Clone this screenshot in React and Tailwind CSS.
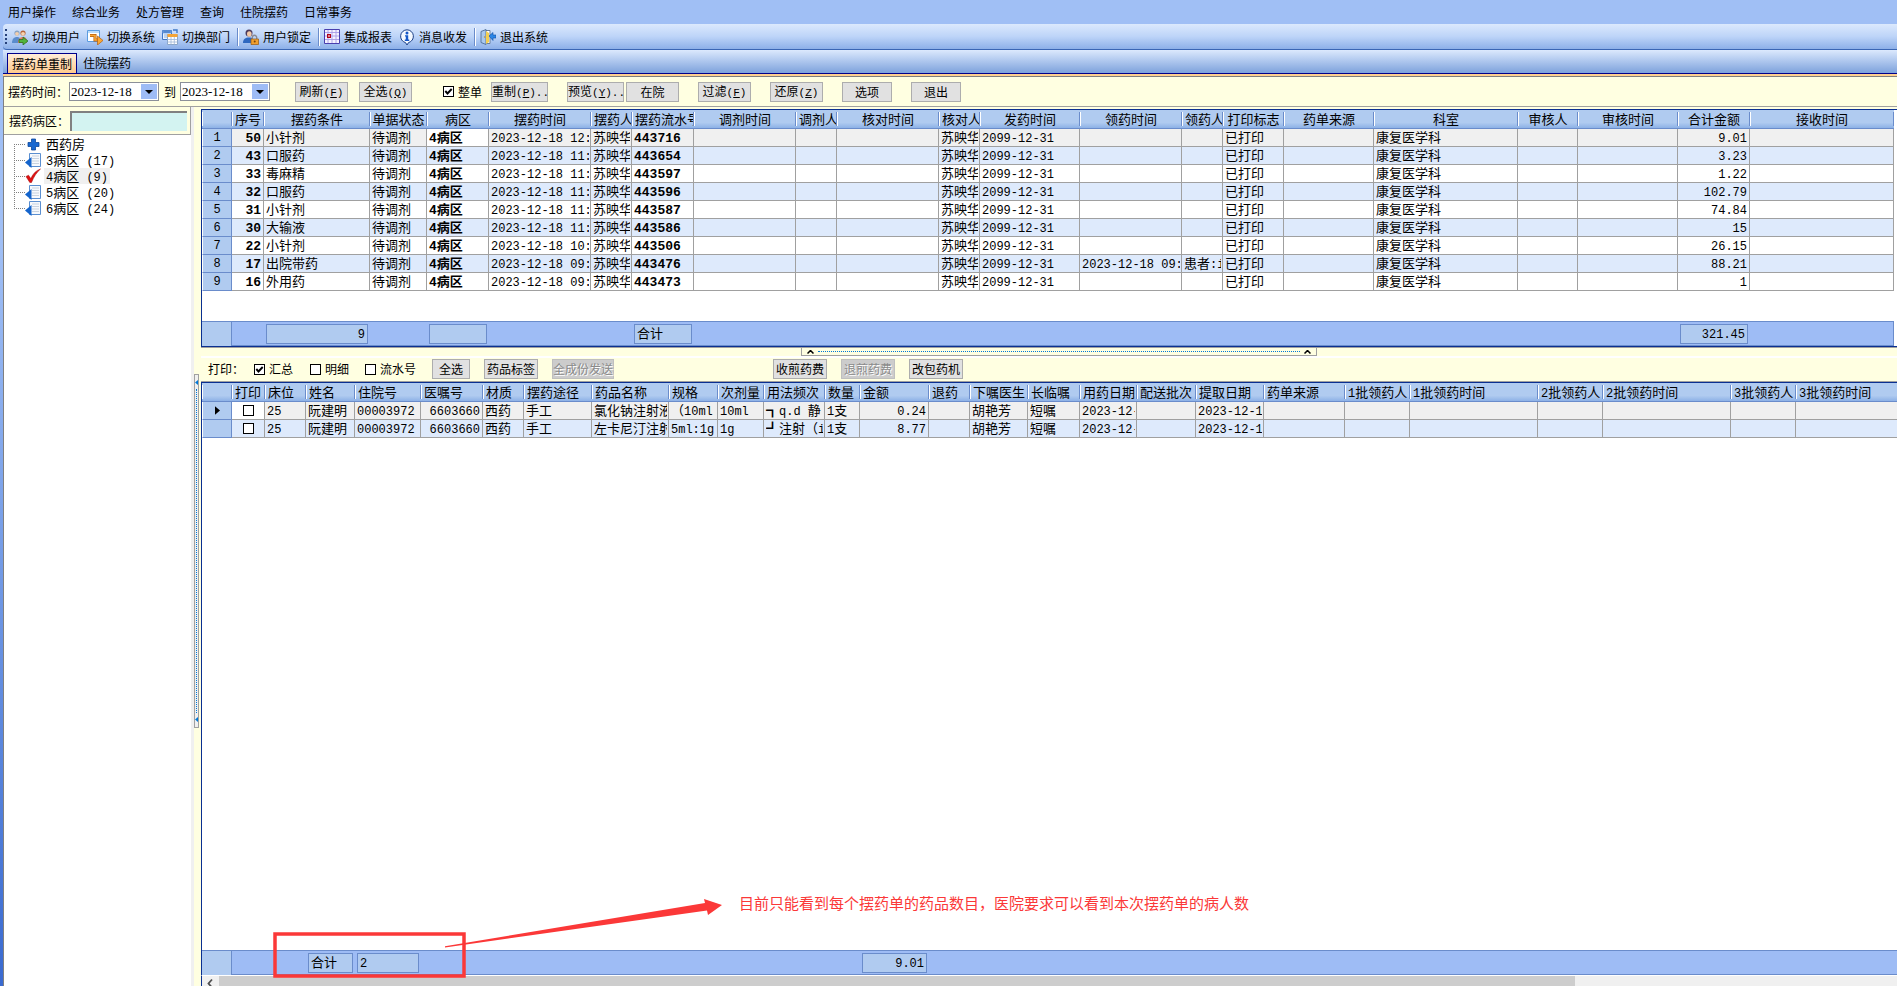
import React from "react";

const SANS = "font-['Noto_Sans_CJK_SC',sans-serif]";

/* Splits mixed text so that half-width runs use the monospaced face. */
function Txt({ children, bold }) {
  const parts = String(children).split(/([\x20-\x7e]+)/).filter(Boolean);
  return parts.map((p, i) =>
    /^[\x20-\x7e]+$/.test(p) ? (
      <span
        key={i}
        className={
          "whitespace-pre font-['Liberation_Mono',monospace] " + (bold ? "text-[13px]" : "text-[12px]")
        }
      >
        {p}
      </span>
    ) : (
      <span key={i}>{p}</span>
    )
  );
}

/* Estimated width of a mixed string: full-width glyphs 13px, half-width 7.2px. */
const textWidth = (s) => [...s].reduce((n, ch) => n + (ch > "~" ? 13 : 7.2), 0);

const TOP_COLS = [
  { w: 30 },
  { t: "序号", w: 32, right: true, bold: true },
  { t: "摆药条件", w: 106 },
  { t: "单据状态", w: 57 },
  { t: "病区", w: 62, bold: true },
  { t: "摆药时间", w: 102 },
  { t: "摆药人", w: 41 },
  { t: "摆药流水号", w: 62, bold: true },
  { t: "调剂时间", w: 102 },
  { t: "调剂人", w: 41 },
  { t: "核对时间", w: 102 },
  { t: "核对人", w: 41 },
  { t: "发药时间", w: 100 },
  { t: "领药时间", w: 102 },
  { t: "领药人", w: 41 },
  { t: "打印标志", w: 61 },
  { t: "药单来源", w: 90 },
  { t: "科室", w: 144 },
  { t: "审核人", w: 60 },
  { t: "审核时间", w: 100 },
  { t: "合计金额", w: 72, right: true },
  { t: "接收时间", w: 144 },
];

const ORDERS = [
  ["50", "小针剂", "12:", "443716", "9.01"],
  ["43", "口服药", "11:", "443654", "3.23"],
  ["33", "毒麻精", "11:", "443597", "1.22"],
  ["32", "口服药", "11:", "443596", "102.79"],
  ["31", "小针剂", "11:", "443587", "74.84"],
  ["30", "大输液", "11:", "443586", "15"],
  ["22", "小针剂", "10:", "443506", "26.15"],
  ["17", "出院带药", "09:", "443476", "88.21", "2023-12-18 09:", "患者:i"],
  ["16", "外用药", "09:", "443473", "1"],
];

const TOP_ROWS = ORDERS.map(([no, cond, time, serial, sum, pick = "", picker = ""], i) => [
  String(i + 1), no, cond, "待调剂", "4病区", "2023-12-18 " + time, "苏映华", serial,
  "", "", "", "苏映华", "2099-12-31", pick, picker, "已打印", "", "康复医学科", "", "", sum, "",
]);

const BOTTOM_COLS = [
  { w: 30 },
  { t: "打印", w: 33, check: true },
  { t: "床位", w: 41 },
  { t: "姓名", w: 49 },
  { t: "住院号", w: 66 },
  { t: "医嘱号", w: 62, right: true },
  { t: "材质", w: 41 },
  { t: "摆药途径", w: 68 },
  { t: "药品名称", w: 77 },
  { t: "规格", w: 49 },
  { t: "次剂量", w: 46 },
  { t: "用法频次", w: 61 },
  { t: "数量", w: 35 },
  { t: "金额", w: 69, right: true },
  { t: "退药", w: 41 },
  { t: "下嘱医生", w: 58 },
  { t: "长临嘱", w: 52 },
  { t: "用药日期", w: 57 },
  { t: "配送批次", w: 59 },
  { t: "提取日期", w: 68 },
  { t: "药单来源", w: 81 },
  { t: "1批领药人", w: 65 },
  { t: "1批领药时间", w: 128 },
  { t: "2批领药人", w: 65 },
  { t: "2批领药时间", w: 128 },
  { t: "3批领药人", w: 65 },
  { t: "3批领药时间", w: 102 },
];

const BOTTOM_ROWS = [
  ["▶", "", "25", "阮建明", "00003972", "6603660", "西药", "手工", "氯化钠注射液", "（10ml", "10ml",
    "┓q.d 静", "1支", "0.24", "", "胡艳芳", "短嘱", "2023-12-", "", "2023-12-1", "", "", "", "", "", "", ""],
  ["", "", "25", "阮建明", "00003972", "6603660", "西药", "手工", "左卡尼汀注射", "5ml:1g", "1g",
    "┛注射（i", "1支", "8.77", "", "胡艳芳", "短嘱", "2023-12-", "", "2023-12-1", "", "", "", "", "", "", ""],
];

function CheckBox({ checked, id, label }) {
  return (
    <span className="relative block size-[11px] shrink-0">
      <input
        id={id}
        type="checkbox"
        defaultChecked={checked}
        aria-label={label}
        className="peer m-0 block size-[11px] appearance-none border border-black bg-white"
      />
      <svg viewBox="0 0 11 11" className="pointer-events-none absolute inset-0 hidden size-[11px] peer-checked:block">
        <path d="M2.300 5l2.200 2.500L8.700 3" fill="none" stroke="black" strokeWidth="1.900" />
      </svg>
    </span>
  );
}

function Grid({ cols, rows, footer, center, activeCol, rowNumbers, children }) {
  const total = cols.reduce((s, c) => s + c.w, 0);
  return (
    <div className="relative flex min-h-0 flex-1 flex-col overflow-hidden border-t border-l border-[#0a2f90] bg-white">
      <table className="table-fixed border-separate border-spacing-0 text-[13px]" style={{ width: total }}>
        <colgroup>
          {cols.map((c, i) => (
            <col key={i} style={{ width: c.w }} />
          ))}
        </colgroup>
        <thead>
          <tr>
            {cols.map((c, i) => {
              const tight = c.t && c.w - c.t.length * 13 < 4;
              const clipped = c.t && textWidth(c.t) > c.w - 3;
              return (
                <th
                  key={i}
                  className="h-[19px] border-b border-[#6a8ccb] bg-linear-to-b from-[#b0cbf0] from-70% to-[#8db1e6] p-0 font-normal"
                >
                  <div
                    className={
                      "flex h-[14px] border-r border-l border-r-[#6a8ccb] border-l-white " +
                      (center && !tight ? "justify-center" : "pl-[2px]")
                    }
                  >
                    <div className={"min-w-0 leading-[13px] whitespace-nowrap " + (clipped ? "overflow-x-clip" : "")}>
                      {c.t ? <Txt>{c.t}</Txt> : null}
                    </div>
                  </div>
                </th>
              );
            })}
          </tr>
        </thead>
        <tbody>
          {rows.map((r, ri) => (
            <tr key={ri} className={ri === 0 ? "bg-[#f0f0f0]" : ri % 2 ? "bg-[#deeafc]" : "bg-white"}>
              {r.map((v, ci) => {
                const c = cols[ci];
                if (ci === 0)
                  return (
                    <td
                      key={ci}
                      className="h-[18px] border-r border-b border-l border-[#6a8ccb] border-l-white bg-[#b0cbf0] p-0"
                    >
                      <div className="flex h-[17px] items-center justify-center leading-[16px]">
                        {rowNumbers ? (
                          <Txt>{v}</Txt>
                        ) : v ? (
                          <svg viewBox="0 0 6 10" className="h-[9px] w-[5px]">
                            <path d="M0 0l6 5-6 5z" />
                          </svg>
                        ) : null}
                      </div>
                    </td>
                  );
                return (
                  <td
                    key={ci}
                    className={
                      "h-[18px] border-r border-b border-[#a0a0a0] p-0 " +
                      (ri === 0 && ci === activeCol ? "bg-white " : "") +
                      (c.bold ? "font-bold" : "")
                    }
                  >
                    {c.check ? (
                      <div className="flex justify-center">
                        <CheckBox label="打印" />
                      </div>
                    ) : (
                      <div
                        className={
                          "ml-[2px] h-[17px] leading-[15px] whitespace-nowrap " +
                          (c.right ? "mr-[2px] text-right " : "mr-px ") +
                          (textWidth(v) > c.w - 4 ? "overflow-x-clip" : "")
                        }
                      >
                        <Txt bold={c.bold}>{v}</Txt>
                      </div>
                    )}
                  </td>
                );
              })}
            </tr>
          ))}
        </tbody>
      </table>
      <div className="min-h-0 flex-1" />
      <div
        className="grid h-[25px] shrink-0 border-y border-r border-[#6a8ccb] bg-[#9ebcf5] text-[13px]"
        style={{ width: total, gridTemplateColumns: cols.map((c) => c.w + "px").join(" ") }}
      >
        {cols.map((c, i) =>
          i === 0 ? (
            <div key={i} className="border-r border-[#6a8ccb] bg-[#b0cbf0]" />
          ) : footer[i] !== undefined ? (
            <div
              key={i}
              className={
                "mx-[2px] my-[2px] border border-[#6a8ccb] bg-[#b0cbf0] px-[2px] leading-[15px] whitespace-nowrap " +
                (c.right || footer[i] === "9" ? "text-right" : "")
              }
            >
              <Txt>{footer[i]}</Txt>
            </div>
          ) : (
            <div key={i} />
          )
        )}
      </div>
      {children}
    </div>
  );
}

function Btn({ children, hot, dots, disabled, className = "" }) {
  return (
    <button
      type="button"
      disabled={disabled}
      className={
        "h-5 shrink-0 border text-[12px] leading-[16px] whitespace-nowrap " +
        (disabled
          ? "border-[#bfbfbf] bg-[#cccccc] text-[#8a8a8a] [text-shadow:1px_1px_0_#fff] "
          : "border-[#adadad] bg-[#e1e1e1] text-black ") +
        className
      }
    >
      {children}
      {hot && (
        <span className="font-['Liberation_Mono',monospace] text-[11px]">
          (<span className="underline">{hot}</span>){dots}
        </span>
      )}
    </button>
  );
}

function DateBox({ id, value }) {
  return (
    <div className="flex h-[19px] w-[90px] border border-[#8c9099] bg-white p-px">
      <input
        id={id}
        defaultValue={value}
        className="min-w-0 flex-1 font-['Liberation_Serif',serif] text-[13px] leading-[14px] outline-none"
      />
      <button type="button" aria-label="选择日期" className="flex w-4 items-center justify-center bg-[#9ebcf5]">
        <svg viewBox="0 0 8 4" className="h-1 w-2">
          <path d="M0 0h8L4 4z" />
        </svg>
      </button>
    </div>
  );
}

const ICONS = {
  users: (
    <>
      <circle cx="5" cy="4" r="2.6" fill="#8aa4c4" />
      <circle cx="11" cy="4" r="2.6" fill="#b8643a" />
      <circle cx="5" cy="4.8" r="1.9" fill="#f3cfae" />
      <circle cx="11" cy="4.8" r="1.9" fill="#f6d3b2" />
      <path d="M0 14c0-4 2-6 5-6s4 2 4 6z" fill="#5b8ccc" />
      <path d="M6 14c0-4 2-6 5-6s4 2 4 5v1z" fill="#e08068" />
      <path d="M7 10.500h4V8l5 4-5 4v-2.500H7z" fill="#52b43c" stroke="#246b1c" strokeWidth=".7" />
    </>
  ),
  system: (
    <>
      <path d="M.5 1.500h12v11H.5z" fill="#fff" stroke="#5a9be0" />
      <path d="M1 2h11v2H1z" fill="#bcdcfa" />
      <path d="M3 6.500h5v4.500h3" fill="none" stroke="#b85e0c" strokeWidth="3" />
      <path d="M3 6.500h5v4.500h3" fill="none" stroke="#f9a836" strokeWidth="1.600" />
      <path d="M10.500 7l5.500 4.500-5.500 4.500z" fill="#f9a836" stroke="#b85e0c" strokeWidth=".7" />
    </>
  ),
  dept: (
    <>
      <path d="M.5 1.500h9v9h-9z" fill="#e8f2fd" stroke="#3f78c8" />
      <path d="M1 2h8v2H1zM2 6h5M2 8h3" fill="#3f78c8" stroke="#7aa6df" strokeWidth=".8" />
      <path d="M11 1h4v3" fill="none" stroke="#3f78c8" strokeWidth="1.400" />
      <path d="M5.500 5.500h10v10h-10z" fill="#fff" stroke="#8aa6c8" />
      <path d="M5.500 5h10v3h-10z" fill="#f4a436" />
      <path d="M5.500 10.500h10M5.500 13h10M9 8v7.500M12.300 8v7.500" stroke="#9fb8d8" strokeWidth=".8" />
    </>
  ),
  lock: (
    <>
      <circle cx="6" cy="4" r="3.500" fill="#4b3a5c" />
      <ellipse cx="6.300" cy="5" rx="2.300" ry="2.800" fill="#f2c9a8" />
      <path d="M0 14c0-4 2.500-5.500 6-5.500s5 2 5 5.500z" fill="#2f68c0" />
      <path d="M9.300 10V8.500a2.200 2.200 0 014.400 0V10" fill="none" stroke="#8a8a92" strokeWidth="1.400" />
      <path d="M8 10h7.500v5.500H8z" fill="#f0a030" stroke="#98590e" strokeWidth=".7" />
      <circle cx="11.700" cy="12.500" r="1" fill="#7a430a" />
    </>
  ),
  report: (
    <>
      <path d="M.5.5h15v14H.5z" fill="#f5f2ff" stroke="#4a3fae" />
      <path d="M1 3.500h14M1 7h14M1 10.500h14M4 1v13M8 1v13M12 1v13" stroke="#a99be6" strokeWidth=".9" />
      <path d="M3 5h4v4H3z" fill="#b00018" />
      <path d="M4.300 6.300h1.400v1.400H4.300z" fill="#fff" />
    </>
  ),
  info: (
    <>
      <path d="M8 .8a6.500 6.500 0 011.500 12.800L8 16l-1.500-2.400A6.500 6.500 0 018 .8z" fill="#f4f9ff" stroke="#1b3f86" />
      <circle cx="8" cy="4" r="1.500" fill="#1557c8" />
      <path d="M6 6.200h3.200v4.300h1V12H5.800v-1.500h1V7.600H6z" fill="#1557c8" />
    </>
  ),
  exit: (
    <>
      <path d="M5 1.500h5v13H5z" fill="#fff" stroke="#6b7f9c" />
      <path d="M1 2.500L6 .5v15l-5-2z" fill="#a9c8ee" stroke="#45658f" strokeWidth=".8" />
      <path d="M6 2l3 2v9l-3 2z" fill="#f3cf52" />
      <circle cx="4.700" cy="8" r=".8" fill="#d49410" />
      <path d="M9 7l4-3.500V6h3v3h-3v2.500z" fill="#2c86e6" stroke="#0f4fa5" strokeWidth=".6" />
    </>
  ),
};

const TOOLS = [
  ["users", "切换用户"],
  ["system", "切换系统"],
  ["dept", "切换部门"],
  null,
  ["lock", "用户锁定"],
  null,
  ["report", "集成报表"],
  ["info", "消息收发"],
  null,
  ["exit", "退出系统"],
];

function WardIcon({ kind }) {
  if (kind === "plus")
    return (
      <svg viewBox="0 0 16 16" className="size-4">
        <path d="M6.500 3h4v3.500H14v4h-3.500V14h-4v-3.500H3v-4h3.500z" fill="#1868d0" stroke="#0c479c" strokeWidth=".8" />
      </svg>
    );
  if (kind === "tick")
    return (
      <svg viewBox="0 0 16 16" className="size-4">
        <path d="M1 8.500l2.500-1.300 2.300 3.400C8 5.500 11 2.500 15.500 1 11.500 4.500 9 8.500 6.500 14.500H4.800z" fill="#e01010" stroke="#a00404" strokeWidth=".5" />
      </svg>
    );
  return (
    <svg viewBox="0 0 16 16" className="size-4">
      <path d="M4.500 1.500h11v13h-11z" fill="#f6f9fd" stroke="#5b8fd0" />
      <path d="M7 4h7M7 6.500h7M7 9h7M7 11.500h7" stroke="#c9d3df" />
      <path d="M0 10.500L6.500 5v11z" fill="#1464cc" />
    </svg>
  );
}

const WARDS = [
  ["plus", "西药房"],
  ["doc", "3病区 (17)"],
  ["tick", "4病区 (9)"],
  ["doc", "5病区 (20)"],
  ["doc", "6病区 (24)"],
];

function Caret() {
  return (
    <svg viewBox="0 0 7 4" className="h-1 w-[7px]">
      <path d="M.5 3.500l3-3 3 3" fill="none" stroke="black" strokeWidth="1.500" />
    </svg>
  );
}

function Field({ id, label, checked }) {
  return (
    <div className="flex items-center gap-1">
      <CheckBox id={id} checked={checked} />
      <label htmlFor={id} className="leading-4">{label}</label>
    </div>
  );
}

export default function App() {
  return (
    <div
      className={
        "flex h-screen flex-col overflow-hidden bg-linear-to-b from-[#a0bff5] from-25% to-[#3a6ad0] pl-[3px] text-[12px] text-black " +
        SANS
      }
    >
      <nav className="flex h-6 shrink-0 items-center gap-4 pb-px pl-[5px]">
        {["用户操作", "综合业务", "处方管理", "查询", "住院摆药", "日常事务"].map((m) => (
          <a key={m} href="#" className="leading-4">
            {m}
          </a>
        ))}
      </nav>

      <div className="flex h-[26px] shrink-0 items-center rounded-l-sm border-b border-[#3a66b4] bg-linear-to-b from-[#dce9fd] via-[#bdd4f8] to-[#8db0e8] pl-[2px]">
        <div className="mr-[5px] h-[15px] border-l-2 border-dotted border-[#27417a]" />
        {TOOLS.map((t, i) =>
          t ? (
            <button key={i} type="button" className="mr-[7px] flex items-center gap-1 leading-4">
              <svg viewBox="0 0 16 16" className="size-4">
                {ICONS[t[0]]}
              </svg>
              {t[1]}
            </button>
          ) : (
            <div key={i} className="mr-1 h-[18px] w-[2px] border-l border-[#6a8ccb] bg-white" />
          )
        )}
      </div>

      <div role="tablist" className="flex h-6 shrink-0 items-end border-b border-[#00008b] bg-linear-to-b from-[#dce9fd] to-[#7ea2dc] pl-1">
        <button role="tab" aria-selected="true" type="button" className="h-5 border border-b-0 border-[#00008b] bg-linear-to-b from-[#ffeeda] to-[#ffc98a] px-[4px] leading-[18px]">
          摆药单重制
        </button>
        <button role="tab" aria-selected="false" type="button" className="h-5 px-[6px] leading-[20px]">
          住院摆药
        </button>
      </div>
      <div className="h-[2px] shrink-0 bg-[#ffd08f]" />

      <div className="flex min-h-0 flex-1 flex-col border-t border-l border-[#808080] bg-[#ffffe1]">
        <form className="flex h-[30px] shrink-0 items-center border-b border-[#a0a0a0] pl-1">
          <label htmlFor="from" className="w-[61px] whitespace-nowrap">摆药时间：</label>
          <DateBox id="from" value="2023-12-18" />
          <label htmlFor="to" className="w-[21px] pl-[5px]">到</label>
          <DateBox id="to" value="2023-12-18" />
          <Btn hot="F" className="ml-[25px] w-[53px]">刷新</Btn>
          <Btn hot="Q" className="ml-[11px] w-[53px]">全选</Btn>
          <div className="ml-[31px] w-[48px]">
            <Field id="whole" label="整单" checked />
          </div>
          <Btn hot="P" dots=".." className="w-[57px]">重制</Btn>
          <Btn hot="Y" dots=".." className="ml-[19px] w-[57px]">预览</Btn>
          <Btn className="ml-[2px] w-[53px]">在院</Btn>
          <Btn hot="F" className="ml-[19px] w-[53px]">过滤</Btn>
          <Btn hot="Z" className="ml-[19px] w-[53px]">还原</Btn>
          <Btn className="ml-[19px] w-[50px]">选项</Btn>
          <Btn className="ml-[19px] w-[50px]">退出</Btn>
        </form>

        <div className="flex min-h-0 flex-1">
          <aside className="flex w-[190px] shrink-0 flex-col border-r-3 border-[#f0f0f0] bg-white">
            <div className="flex h-7 shrink-0 items-center border-r border-b border-[#a0a0a0] bg-[#ffffe1] pl-[5px]">
              <label htmlFor="ward" className="w-[61px] whitespace-nowrap">摆药病区：</label>
              <input id="ward" className="h-5 w-[117px] border-t-2 border-l-2 border-t-[#808080] border-l-[#808080] bg-[#d3f3f1] outline-none" />
            </div>
            <ul className="relative ml-[10px] pt-px text-[13px]">
              <li aria-hidden="true" className="absolute top-[9px] h-[65px] border-l border-dotted border-[#808080]" />
              {WARDS.map(([k, t]) => (
                <li key={t} className="flex h-4 items-center">
                  <span className="w-[11px] border-t border-dotted border-[#808080]" />
                  <WardIcon kind={k} />
                  <a href="#" className={"ml-[3px] h-4 px-[2px] leading-[15px] " + (k === "tick" ? "bg-[#f0f0f0]" : "")}>
                    <Txt>{t}</Txt>
                  </a>
                </li>
              ))}
            </ul>
          </aside>

          <div className="flex w-[7px] shrink-0 flex-col items-start pt-[267px]">
            <div className="flex h-[354px] w-[5px] flex-col items-center justify-between border border-[#a0a0a0] bg-[#f0f0f0] py-[5px]">
              <svg viewBox="0 0 3 5" className="h-[5px] w-[3px]"><path d="M3 0v5L0 2.500z" fill="#0078d7" /></svg>
              <div className="my-1 flex-1 border-l border-dotted border-[#0078d7]" />
              <svg viewBox="0 0 3 5" className="h-[5px] w-[3px]"><path d="M3 0v5L0 2.500z" fill="#0078d7" /></svg>
            </div>
          </div>

          <main className="flex min-w-0 flex-1 flex-col pt-[2px]">
            <section className="flex h-[238px] shrink-0 flex-col border-b border-[#0a2f90]">
              <Grid cols={TOP_COLS} rows={TOP_ROWS} center rowNumbers activeCol={4} footer={{ 2: "9", 4: "", 7: "合计", 20: "321.45" }} />
            </section>

            <div className="flex h-[11px] shrink-0 border-t border-b-2 border-t-[#a0a0a0] border-b-white pl-[600px]">
              <div className="flex w-[516px] items-center gap-1 border border-t-0 border-[#a0a0a0] px-[5px]">
                <Caret />
                <div className="flex-1 border-t border-dotted border-[#0078d7]" />
                <Caret />
              </div>
            </div>

            <form className="flex h-[24px] shrink-0 items-center border-b border-[#a0a0a0] pb-px pl-[7px]">
              <span className="w-[46px]">打印：</span>
              <div className="w-14"><Field id="sum" label="汇总" checked /></div>
              <div className="w-[55px]"><Field id="detail" label="明细" /></div>
              <div className="w-[67px]"><Field id="serial" label="流水号" /></div>
              <Btn className="w-[38px]">全选</Btn>
              <Btn className="ml-[14px] w-[54px]">药品标签</Btn>
              <Btn disabled className="ml-[14px] w-[62px]">全成份发送</Btn>
              <Btn className="ml-[159px] w-[54px]">收煎药费</Btn>
              <Btn disabled className="ml-[14px] w-[54px]">退煎药费</Btn>
              <Btn className="ml-[14px] w-[54px]">改包药机</Btn>
            </form>

            <section className="relative flex min-h-0 flex-1 flex-col">
              <Grid cols={BOTTOM_COLS} rows={BOTTOM_ROWS} activeCol={1} footer={{ 3: "合计", 4: "2", 13: "9.01" }} />
              <div className="flex h-[11px] shrink-0 overflow-hidden border-t border-l border-t-white border-l-[#0a2f90] bg-[#f0f0f0]">
                <svg viewBox="0 0 17 10" className="h-[10px] w-[17px] shrink-0">
                  <path d="M10 3.500L6.500 7.500 10 11.500" fill="none" stroke="#505050" strokeWidth="1.800" />
                </svg>
                <div className="w-[80%] bg-[#cdcdcd]" />
              </div>
              <svg viewBox="272 896 452 84" className="absolute bottom-[6px] left-[71px] h-[84px] w-[452px]">
                <rect x="275" y="934" width="189" height="42" fill="none" stroke="#fb3838" strokeWidth="3.500" />
                <path d="M445 946.300L705 903l-1-4 18 6-14 10-1-4.500-262 37z" fill="#fb3838" />
              </svg>
              <p className="absolute bottom-[73px] left-[538px] text-[15px] leading-5 whitespace-nowrap text-[#fb3838]">
                目前只能看到每个摆药单的药品数目，医院要求可以看到本次摆药单的病人数
              </p>
            </section>
          </main>
        </div>
      </div>
    </div>
  );
}
